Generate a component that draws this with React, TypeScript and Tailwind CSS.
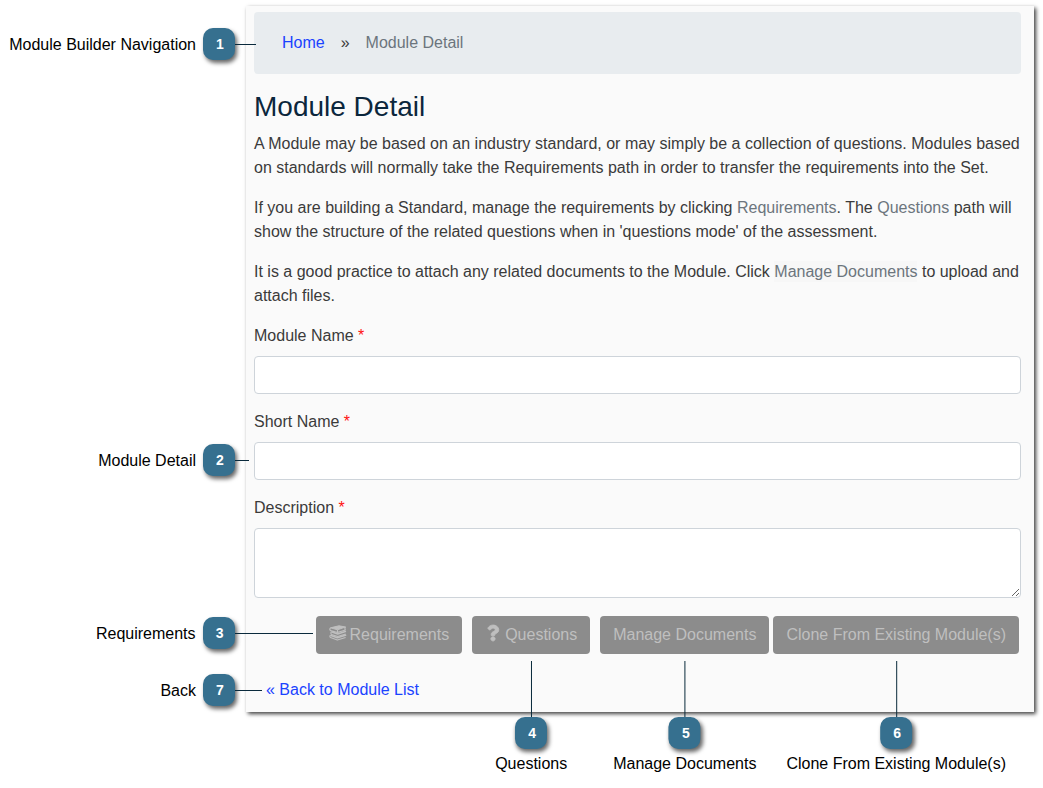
import type { ReactNode } from "react";
import { FaQuestion } from "react-icons/fa";

function Badge({ n }: { n: number }) {
  return (
    <span className="flex size-8 shrink-0 items-center justify-center rounded-[10px] bg-[#36708f] pl-0.5 text-sm font-bold text-white shadow-[2px_3px_4px_rgba(0,0,0,0.6)]">
      {n}
    </span>
  );
}

function SideCallout({ n, label, place, line }: { n: number; label: string; place: string; line: string }) {
  return (
    <div className={`absolute right-full flex items-center whitespace-nowrap text-black ${place}`}>
      <span className="mr-[7px] pt-0.5">{label}</span>
      <Badge n={n} />
      <span className={`h-px bg-[#0a2a3c] ${line}`} />
    </div>
  );
}

function BottomCallout({ n, label }: { n: number; label: string }) {
  return (
    <div className="absolute left-1/2 top-full mt-[7px] flex -translate-x-1/2 flex-col items-center whitespace-nowrap text-black">
      <span className="h-14 w-px bg-[#0a2a3c]" />
      <Badge n={n} />
      <span className="mt-[3px]">{label}</span>
    </div>
  );
}

function BooksIcon() {
  return (
    <svg viewBox="0 0 18 16" className="h-4 w-[18px]" fill="none" stroke="currentColor" strokeLinejoin="round" aria-hidden="true">
      <path d="M1.5 2.8 10 .8l6.500 1.200-8 2.800z" fill="currentColor" strokeWidth="1" />
      <path d="M1.500 2.800c-.8.900-.8 2 0 2.800l6.900 1.900 8.100-2.500M16.500 2c-.7.900-.7 2.100 0 3M8.500 4.800v2.700" strokeWidth="1.200" />
      <path d="m2.500 6.800 6.200 2.100 8.300-2.700" strokeWidth="1.600" />
      <path d="M2.500 6.800c-.9.800-.9 1.700 0 2.600l6.300 2.100 7.900-2.500" strokeWidth="1.100" />
      <path d="m1.300 10.200 7 2.600 8.900-2.900" strokeWidth="1.600" />
      <path d="M1.300 10.200c-.6.900-.5 1.800.2 2.400l6.800 2.500 8.300-2.700" strokeWidth="1.100" />
    </svg>
  );
}

function ActionButton({ children, callout }: { children: ReactNode; callout?: ReactNode }) {
  return (
    <div className="relative">
      <button
        type="button"
        disabled
        className="flex h-[38px] items-center whitespace-nowrap rounded bg-[#8c8c8c] px-[13px] text-[#bfbfbf]"
      >
        {children}
      </button>
      {callout}
    </div>
  );
}

function FieldLabel({ id, text }: { id: string; text: string }) {
  return (
    <label htmlFor={id} className="mb-2 block">
      {text} <span className="text-[#ff1010]">*</span>
    </label>
  );
}

export default function App() {
  return (
    <div className="min-h-screen bg-white pb-[76px] pl-[246px] pr-[9px] pt-[6px] font-['Liberation_Sans',Arial,sans-serif] text-base text-[#3b3b3b]">
      <main className="bg-[#fafafa] pb-2.5 pl-2 pr-[13px] pt-[6px] shadow-[2px_2px_4px_rgba(0,0,0,0.75)]">
        <nav aria-label="Breadcrumb" className="relative flex h-[62px] items-center gap-4 rounded bg-[#e8ecef] pl-7">
          <a href="#home" className="text-[#1a43ff]">Home</a>
          <span>»</span>
          <span className="text-[#6c757d]">Module Detail</span>
          <SideCallout n={1} label="Module Builder Navigation" place="top-4 -mr-0.5" line="w-[21px]" />
        </nav>

        <h1 className="mb-2 mt-4 text-[28px] leading-[34px] text-[#0b263c]">Module Detail</h1>
        <p className="mb-4">
          A Module may be based on an industry standard, or may simply be a collection of questions. Modules based on
          standards will normally take the Requirements path in order to transfer the requirements into the Set.
        </p>
        <p className="mb-4">
          If you are building a Standard, manage the requirements by clicking{" "}
          <span className="text-[#6c757d]">Requirements</span>. The <span className="text-[#6c757d]">Questions</span>{" "}
          path will show the structure of the related questions when in 'questions mode' of the assessment.
        </p>
        <p className="mb-4">
          It is a good practice to attach any related documents to the Module. Click{" "}
          <span className="bg-[#f7f7f7] py-0.5 text-[#6c757d]">Manage Documents</span> to upload and attach files.
        </p>

        <FieldLabel id="module-name" text="Module Name" />
        <input
          id="module-name"
          type="text"
          className="mb-4 block h-[38px] w-full rounded border border-[#ced4da] bg-white px-3"
        />

        <FieldLabel id="short-name" text="Short Name" />
        <div className="relative mb-4">
          <input
            id="short-name"
            type="text"
            className="block h-[38px] w-full rounded border border-[#ced4da] bg-white px-3"
          />
          <SideCallout n={2} label="Module Detail" place="top-0.5 mr-[5px]" line="w-[14px]" />
        </div>

        <FieldLabel id="description" text="Description" />
        <textarea
          id="description"
          className="block h-[70px] w-full resize-y rounded border border-[#ced4da] bg-white px-3 py-1.5"
        />

        <div className="mr-0.5 mt-[18px] flex justify-end gap-1">
          <div className="flex gap-2.5">
            <ActionButton callout={<SideCallout n={3} label="Requirements" place="top-px mr-[3px]" line="w-[78px]" />}>
              <span className="mb-1 mr-[3px]">
                <BooksIcon />
              </span>
              Requirements
            </ActionButton>
            <ActionButton callout={<BottomCallout n={4} label="Questions" />}>
              <FaQuestion className="mb-1 mr-1 size-4 overflow-visible stroke-[24px]" aria-hidden="true" />
              Questions
            </ActionButton>
            <ActionButton callout={<BottomCallout n={5} label="Manage Documents" />}>Manage Documents</ActionButton>
          </div>
          <ActionButton callout={<BottomCallout n={6} label="Clone From Existing Module(s)" />}>
            Clone From Existing Module(s)
          </ActionButton>
        </div>

        <div className="mt-6 flex pl-3">
          <div className="relative">
            <a href="#modules" className="text-[#1a43ff]">« Back to Module List</a>
            <SideCallout n={7} label="Back" place="-top-1 mr-1" line="w-[27px]" />
          </div>
        </div>
      </main>
    </div>
  );
}
